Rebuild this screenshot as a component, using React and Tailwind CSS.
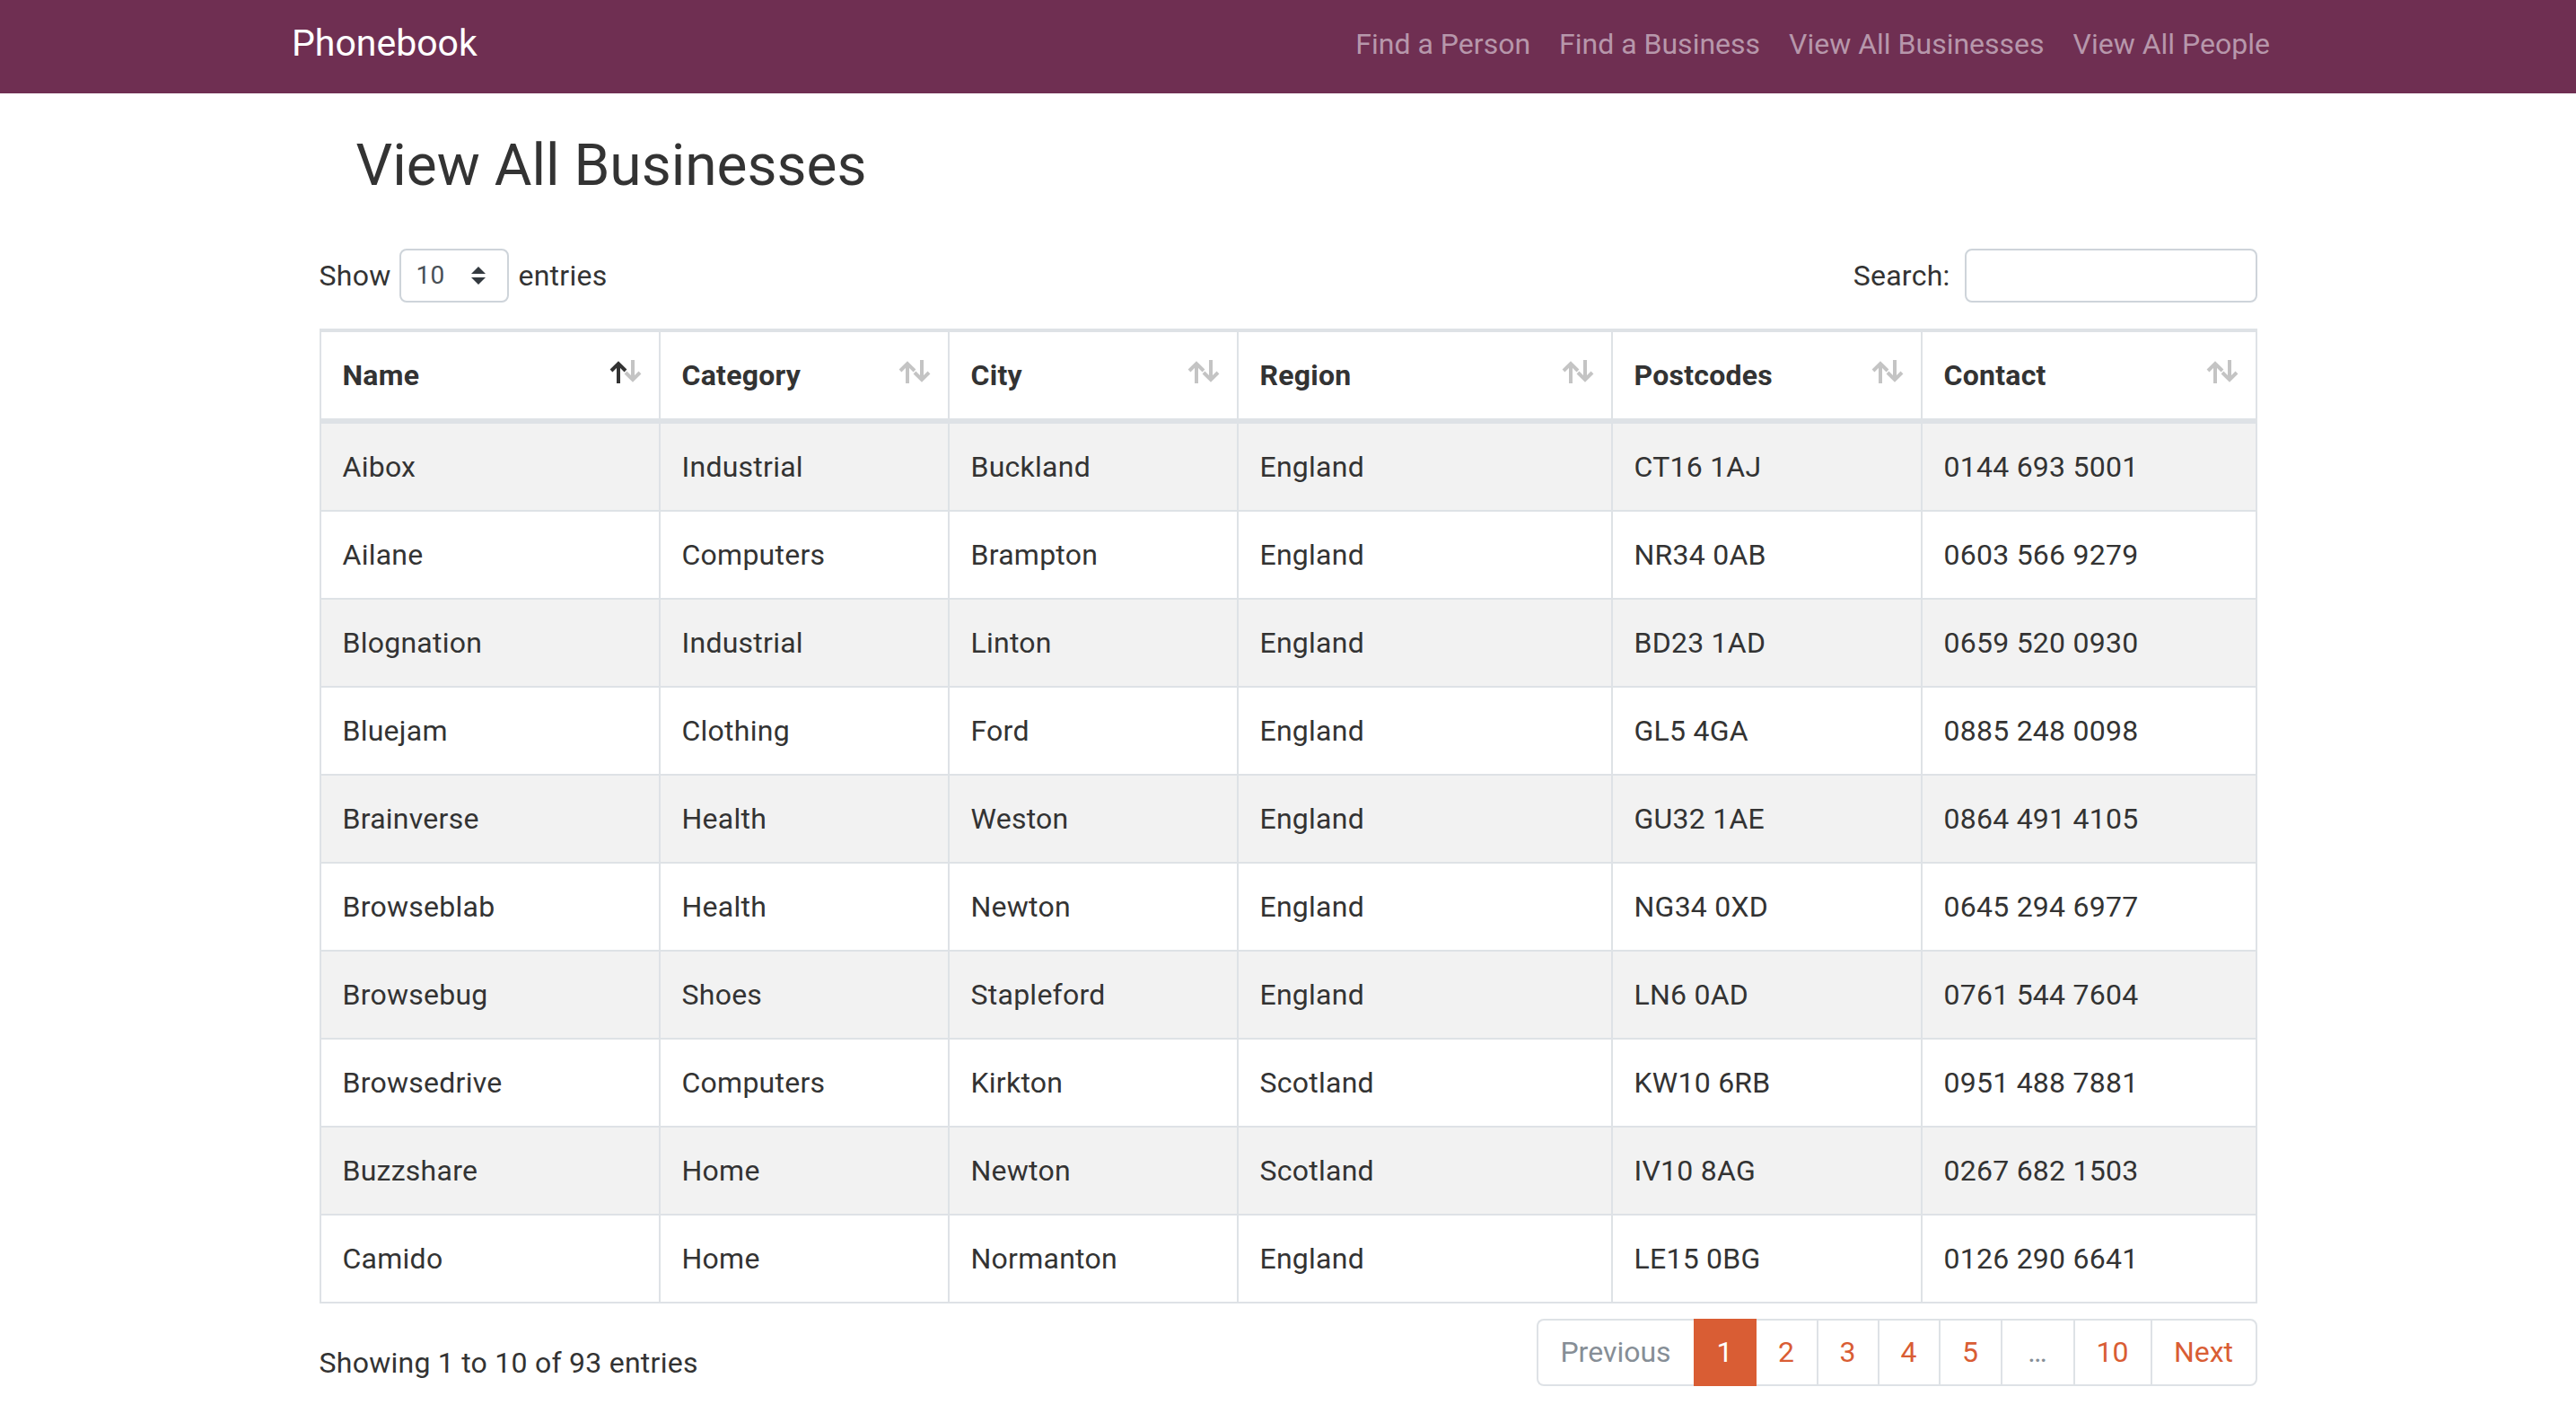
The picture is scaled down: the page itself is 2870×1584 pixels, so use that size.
import React from "react";

const rows = [
  ["Aibox", "Industrial", "Buckland", "England", "CT16 1AJ", "0144 693 5001"],
  ["Ailane", "Computers", "Brampton", "England", "NR34 0AB", "0603 566 9279"],
  ["Blognation", "Industrial", "Linton", "England", "BD23 1AD", "0659 520 0930"],
  ["Bluejam", "Clothing", "Ford", "England", "GL5 4GA", "0885 248 0098"],
  ["Brainverse", "Health", "Weston", "England", "GU32 1AE", "0864 491 4105"],
  ["Browseblab", "Health", "Newton", "England", "NG34 0XD", "0645 294 6977"],
  ["Browsebug", "Shoes", "Stapleford", "England", "LN6 0AD", "0761 544 7604"],
  ["Browsedrive", "Computers", "Kirkton", "Scotland", "KW10 6RB", "0951 488 7881"],
  ["Buzzshare", "Home", "Newton", "Scotland", "IV10 8AG", "0267 682 1503"],
  ["Camido", "Home", "Normanton", "England", "LE15 0BG", "0126 290 6641"],
];

const headers = ["Name", "Category", "City", "Region", "Postcodes", "Contact"];

const GRID = "grid grid-cols-[376px_322px_322px_417px_345px_373px]";

function SortIcon({ active }) {
  const light = "#c4c4c4";
  return (
    <svg
      width="38"
      height="26"
      viewBox="0 0 38 26"
      className="shrink-0 -mr-[6px] -mt-[7px]"
    >
      <g fill="none" strokeWidth="4" strokeLinecap="butt" strokeLinejoin="miter">
        <path d="M11 26V4M3 12l8-8 8 8" stroke={active ? "#333333" : light} />
        <path d="M27 0v22M19 14l8 8 8-8" stroke={light} />
      </g>
    </svg>
  );
}

function NavLink({ children }) {
  return (
    <a href="#" className="px-4 text-[32px] leading-[48px] text-[#b797ab] no-underline">
      {children}
    </a>
  );
}

export default function App() {
  return (
    <div className="min-h-screen bg-white font-[Roboto,sans-serif] text-[#333333]">
      {/* Navbar */}
      <nav className="h-[104px] bg-[#6f2f52]">
        <div className="mx-auto flex w-[2280px] items-start justify-between px-[30px]">
          <a href="#" className="mt-[18px] text-[41px] leading-[60px] text-white">
            Phonebook
          </a>
          <div className="mt-[25px] flex">
            <NavLink>Find a Person</NavLink>
            <NavLink>Find a Business</NavLink>
            <NavLink>View All Businesses</NavLink>
            <NavLink>View All People</NavLink>
          </div>
        </div>
      </nav>

      <main className="mx-auto w-[2159px]">
        <h1 className="mt-[43px] pl-[41px] text-[64px] font-normal leading-[1.2]">
          View All Businesses
        </h1>

        {/* Controls */}
        <div className="mt-[53px] flex h-[60px] items-center justify-between text-[32px] leading-[48px] tracking-[0.25px]">
          <div className="flex items-center gap-[10px]">
            <span>Show</span>
            <div className="relative h-[60px] w-[122px]">
              <select className="h-full w-full appearance-none rounded-[8px] border-2 border-[#ced4da] bg-white pl-4 text-[28px] text-[#495057] outline-none">
                <option>10</option>
                <option>25</option>
                <option>50</option>
                <option>100</option>
              </select>
              <svg
                width="16"
                height="20"
                viewBox="0 0 16 20"
                className="pointer-events-none absolute right-[26px] top-[20px]"
              >
                <path d="M8 0L0 8h16zM8 20L0 12h16z" fill="#343a40" />
              </svg>
            </div>
            <span>entries</span>
          </div>
          <div className="flex items-center gap-4">
            <span>Search:</span>
            <input
              type="search"
              className="h-[60px] w-[326px] rounded-[8px] border-2 border-[#ced4da] bg-white px-4 text-[28px] outline-none"
            />
          </div>
        </div>

        {/* Table */}
        <div className="mt-[29px] border-2 border-[#dee2e6] text-[32px] leading-[48px] tracking-[0.25px]">
          <div className={`${GRID} border-t-2 border-b-4 border-[#dee2e6] font-bold`}>
            {headers.map((h, i) => (
              <div
                key={h}
                className={`px-6 py-6 ${i > 0 ? "border-l-2 border-[#dee2e6]" : ""}`}
              >
                <div className="flex items-center justify-between">
                  <span>{h}</span>
                  <SortIcon active={i === 0} />
                </div>
              </div>
            ))}
          </div>
          {rows.map((r, ri) => (
            <div
              key={r[0]}
              className={`${GRID} border-t-2 border-[#dee2e6] ${
                ri % 2 === 0 ? "bg-[#f2f2f2]" : "bg-white"
              }`}
            >
              {r.map((c, ci) => (
                <div
                  key={ci}
                  className={`px-6 py-6 ${ci > 0 ? "border-l-2 border-[#dee2e6]" : ""}`}
                >
                  {c}
                </div>
              ))}
            </div>
          ))}
        </div>

        {/* Footer */}
        <div className="flex items-start justify-between text-[32px]">
          <div className="mt-[42px] leading-[48px] tracking-[0.25px]">
            Showing 1 to 10 of 93 entries
          </div>
          <div className="mt-[17px] flex h-[75px] leading-[48px]">
            <div className="flex w-[175px] items-center justify-center rounded-l-[8px] border-y-2 border-l-2 border-[#dee2e6] text-[#868e96]">
              Previous
            </div>
            <div className="flex w-[70px] items-center justify-center bg-[#d95d34] text-white">
              1
            </div>
            <div className="flex w-[67px] items-center justify-center border-y-2 border-[#dee2e6] text-[#d95d34]">
              2
            </div>
            <div className="flex w-[68px] items-center justify-center border-y-2 border-l-2 border-[#dee2e6] text-[#d95d34]">
              3
            </div>
            <div className="flex w-[68px] items-center justify-center border-y-2 border-l-2 border-[#dee2e6] text-[#d95d34]">
              4
            </div>
            <div className="flex w-[69px] items-center justify-center border-y-2 border-l-2 border-[#dee2e6] text-[#d95d34]">
              5
            </div>
            <div className="flex w-[81px] items-center justify-center border-y-2 border-l-2 border-[#dee2e6] text-[#868e96]">
              …
            </div>
            <div className="flex w-[86px] items-center justify-center border-y-2 border-l-2 border-[#dee2e6] text-[#d95d34]">
              10
            </div>
            <div className="flex w-[119px] items-center justify-center rounded-r-[8px] border-2 border-[#dee2e6] text-[#d95d34]">
              Next
            </div>
          </div>
        </div>
      </main>
    </div>
  );
}
